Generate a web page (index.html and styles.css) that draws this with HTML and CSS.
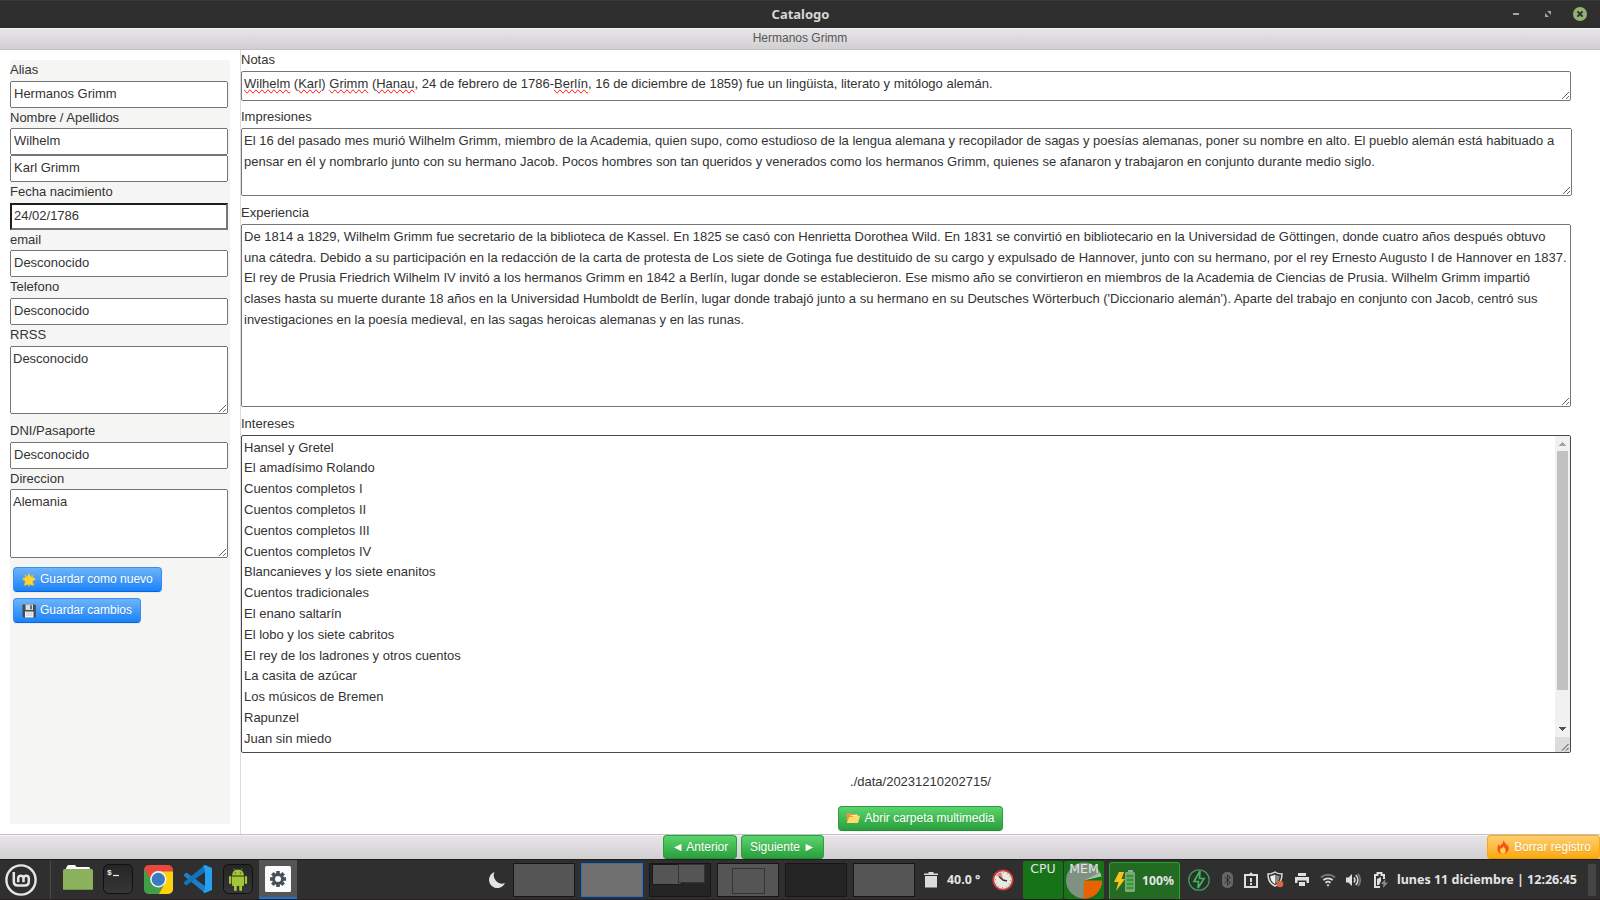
FILE: index.html
```html
<!DOCTYPE html>
<html lang="es">
<head>
<meta charset="utf-8">
<title>Catalogo</title>
<link rel="stylesheet" href="styles.css">
</head>
<body>
<div class="desktop">
  <div class="titlebar">
    <span class="titlebar-text">Catalogo</span>
    <div class="window-controls">
      <svg width="6" height="14" viewBox="0 0 6 14"><path d="M0 6h6v2H0z" fill="#a5a5a5"/></svg>
      <svg class="ctl-max" width="6" height="14" viewBox="0 0 6 14"><path d="M2 4h4v4zM0 6v4h4z" fill="#a5a5a5"/></svg>
      <svg width="14" height="14" viewBox="0 0 14 14"><circle cx="7" cy="7" r="7" fill="#92b372"/><path d="M4.400 4.400l5.200 5.200M9.600 4.400l-5.200 5.200" stroke="#2f2f2f" stroke-width="2"/></svg>
    </div>
  </div>
  <header class="toolbar toolbar-header"><h1 class="title">Hermanos Grimm</h1></header>

  <main class="content">
    <div class="side">
      <form class="side-form">
        <label>Alias</label>
        <input type="text" value="Hermanos Grimm">
        <label>Nombre / Apellidos</label>
        <input type="text" value="Wilhelm">
        <input type="text" value="Karl Grimm">
        <label>Fecha nacimiento</label>
        <input type="text" class="date" value="24/02/1786">
        <label>email</label>
        <input type="text" value="Desconocido">
        <label>Telefono</label>
        <input type="text" value="Desconocido">
        <label>RRSS</label>
        <textarea class="small">Desconocido</textarea>
        <label>DNI/Pasaporte</label>
        <input type="text" value="Desconocido">
        <label>Direccion</label>
        <textarea class="small last">Alemania</textarea>
        <button type="button" class="btn btn-primary">
          <svg class="emoji" viewBox="0 0 14 14"><path d="M7 0l1.300 3.200L11.600 1.500l-.9 3.400L14 6.500l-3 1.700 1.300 4.300-3.600-1.400L7 14l-1.700-2.900-3.600 1.400L3 8.200 0 6.500l3.300-1.600-.9-3.400 3.300 1.700z" fill="#f5b52e"/><path d="M7 .3l1.800 4.300 4.700.5-3.500 3.100 1.100 4.700L7 10.400l-4.100 2.500L4 8.200.5 5.100l4.700-.5z" fill="#fdd835"/></svg>
          <span>Guardar como nuevo</span>
        </button>
        <button type="button" class="btn btn-primary">
          <svg class="emoji" viewBox="0 0 14 14"><path d="M.5.500h12.500l.8 1v12H1.500l-1-1z" fill="#424b51"/><path d="M3.500.500h7.500v5.500H3.500z" fill="#d9dde0"/><path d="M8.300 1.200h1.500v4H8.300z" fill="#424b51"/><path d="M3 7.500h8.500v6H3z" fill="#f4f4f4"/><path d="M4 9h6.500M4 11h6.500" stroke="#b4bdc2" stroke-width=".8"/></svg>
          <span>Guardar cambios</span>
        </button>
      </form>
    </div>

    <section class="main-pane">
      <label>Notas</label>
      <div class="box notas"><span class="sp">Wilhelm</span> (<span class="sp">Karl</span>) <span class="sp">Grimm</span> (<span class="sp">Hanau</span>, 24 de febrero de 1786-<span class="sp">Berlín</span>, 16 de diciembre de 1859) fue un lingüista, literato y mitólogo alemán.</div>
      <label>Impresiones</label>
      <textarea class="impresiones">El 16 del pasado mes murió Wilhelm Grimm, miembro de la Academia, quien supo, como estudioso de la lengua alemana y recopilador de sagas y poesías alemanas, poner su nombre en alto. El pueblo alemán está habituado a pensar en él y nombrarlo junto con su hermano Jacob. Pocos hombres son tan queridos y venerados como los hermanos Grimm, quienes se afanaron y trabajaron en conjunto durante medio siglo.</textarea>
      <label>Experiencia</label>
      <textarea class="experiencia">De 1814 a 1829, Wilhelm Grimm fue secretario de la biblioteca de Kassel. En 1825 se casó con Henrietta Dorothea Wild. En 1831 se convirtió en bibliotecario en la Universidad de Göttingen, donde cuatro años después obtuvo una cátedra. Debido a su participación en la redacción de la carta de protesta de Los siete de Gotinga fue destituido de su cargo y expulsado de Hannover, junto con su hermano, por el rey Ernesto Augusto I de Hannover en 1837.
El rey de Prusia Friedrich Wilhelm IV invitó a los hermanos Grimm en 1842 a Berlín, lugar donde se establecieron. Ese mismo año se convirtieron en miembros de la Academia de Ciencias de Prusia. Wilhelm Grimm impartió clases hasta su muerte durante 18 años en la Universidad Humboldt de Berlín, lugar donde trabajó junto a su hermano en su Deutsches Wörterbuch ('Diccionario alemán'). Aparte del trabajo en conjunto con Jacob, centró sus investigaciones en la poesía medieval, en las sagas heroicas alemanas y en las runas.</textarea>
      <label>Intereses</label>
      <div class="box intereses">
        <div class="lines">Hansel y Gretel
El amadísimo Rolando
Cuentos completos I
Cuentos completos II
Cuentos completos III
Cuentos completos IV
Blancanieves y los siete enanitos
Cuentos tradicionales
El enano saltarín
El lobo y los siete cabritos
El rey de los ladrones y otros cuentos
La casita de azúcar
Los músicos de Bremen
Rapunzel
Juan sin miedo</div>
        <div class="scrollbar">
          <svg width="15" height="15" viewBox="0 0 15 15" shape-rendering="crispEdges"><path d="M4 10h7V9h-1V8H9V7H8V6H7v1H6v1H5v1H4z" fill="#a3a3a3"/></svg>
          <div class="thumb"></div>
          <svg class="down" width="15" height="15" viewBox="0 0 15 15" shape-rendering="crispEdges"><path d="M4 5h7v1h-1v1H9v1H8v1H7V8H6V7H5V6H4z" fill="#505050"/></svg>
          <svg class="corner" width="15" height="15" viewBox="0 0 15 15"><path d="M7 13.500L13.500 7M11 13.500l2.500-2.500" stroke="#444" stroke-width="1"/></svg>
        </div>
      </div>
      <div class="path">./data/20231210202715/</div>
      <div class="media">
        <button type="button" class="btn btn-positive open">
          <svg class="emoji" viewBox="0 0 14 14"><path d="M.5 3l.8-1h3.500l1 1.200h5.700l.5.600V12H1z" fill="#f19534"/><path d="M3.500 4.500L11 3.400l.5 3z" fill="#fff3d0"/><path d="M3.300 6h3.500L8 4.700h5.500l.4.600L12 12H.8z" fill="#ffdc6b"/></svg>
          <span>Abrir carpeta multimedia</span>
        </button>
      </div>
    </section>
  </main>

  <footer class="toolbar toolbar-footer">
    <div class="pager">
      <button type="button" class="btn btn-positive prev">◄ Anterior</button>
      <button type="button" class="btn btn-positive next">Siguiente ►</button>
    </div>
    <button type="button" class="btn btn-warning">
      <svg class="emoji" viewBox="0 0 14 14"><path d="M7.600 0c.3 3 3.200 3.500 3.200 6.200.5-.5.700-1.200.6-2 1.200 1.600 1.500 3.200 1.300 4.900-.4 3-2.700 4.900-5.700 4.900s-5.500-2-5.600-5c-.1-2 .8-3.300 1.300-4.800.7.500.9 1.200.9 2C5.500 4.700 7.400 3.200 7.600 0z" fill="#f4511e"/><path d="M7 5.500c.2 2 2.700 2.600 2.700 5.200 0 1.900-1.200 3-2.800 3s-2.800-1.100-2.800-3c0-1.300.6-2 1-3 .6.400.8.900.9 1.400C6.800 8 7.100 7 7 5.500z" fill="#ffd54f"/></svg>
      <span>Borrar registro</span>
    </button>
  </footer>

  <div class="taskbar">
    <svg class="mint" width="32" height="32" viewBox="0 0 32 32" fill="none" stroke="#e6e6e6"><circle cx="16" cy="16" r="14.600" stroke-width="2.400"/><path d="M8.800 8v9.500c0 2.500 1.500 4 4 4h7c2.500 0 4-1.500 4-4V14a2.700 2.700 0 0 0-5.300 0v4.300M18.500 14a2.700 2.700 0 0 0-5.300 0v4.300" stroke-width="2.500"/></svg>
    <i class="sep"></i>
    <svg class="i-folder" width="30" height="26" viewBox="0 0 30 26"><path d="M3 3l2-3h7l1.500 2H26l1 1v4H3z" fill="#fff"/><rect y="4" width="30" height="21" rx="1.500" fill="#8bb15d"/><path d="M1 24.500h28" stroke="#6f9446"/></svg>
    <svg class="i-term" width="30" height="30" viewBox="0 0 30 30"><defs><linearGradient id="dk" x2="0" y2="1"><stop stop-color="#252525"/><stop offset="1" stop-color="#363636"/></linearGradient></defs><rect x=".5" y=".5" width="29" height="29" rx="5" fill="url(#dk)" stroke="#111"/><text x="4" y="10.500" class="prompt">$</text><path d="M10 11.500h6" stroke="#eee" stroke-width="1.200"/></svg>
    <svg class="i-chrome" width="29" height="29" viewBox="0 0 29 29"><defs><clipPath id="cr"><rect width="29" height="29" rx="5"/></clipPath></defs><g clip-path="url(#cr)"><path d="M0 0h29v29H0z" fill="#e8493f"/><path d="M0 4l9 13 10 4-4 8H0z" fill="#41a047"/><path d="M14 6.500h15V29H15l6-11z" fill="#fdd208"/></g><circle cx="14.300" cy="14.300" r="8.200" fill="#f1f1f1"/><circle cx="14.300" cy="14.300" r="6.600" fill="#3a7abf"/></svg>
    <svg class="i-code" width="28" height="28" viewBox="0 0 28 28"><path d="M0 9.500l2.300-2L21 21v7L0 11z" fill="#1b80c8"/><path d="M0 18.500l2.300 2L21 7V0L0 17z" fill="#1274bd"/><path d="M21 0l7 3v22l-7 3-2-1 2-3V4.500L19 1z" fill="#26a1f1"/></svg>
    <svg class="i-android" width="30" height="30" viewBox="0 0 30 30"><rect x=".5" y=".5" width="29" height="29" rx="5" fill="url(#dk)" stroke="#111"/><g fill="#a4c639"><path d="M9 11.500a6 6 0 0 1 12 0z"/><path d="M9 12.500h12V21a1 1 0 0 1-1 1H10a1 1 0 0 1-1-1z"/><rect x="6" y="12" width="2.300" height="8" rx="1.100"/><rect x="21.800" y="12" width="2.300" height="8" rx="1.100"/><rect x="11" y="20" width="2.800" height="7" rx="1.200"/><rect x="16.200" y="20" width="2.800" height="7" rx="1.200"/></g><path d="M11 4.500l1.500 2.500M19 4.500L17.500 7" stroke="#a4c639" stroke-width=".7"/><circle cx="12.500" cy="9" r=".6" fill="#222"/><circle cx="17.500" cy="9" r=".6" fill="#222"/></svg>
    <div class="active-app"><svg width="26" height="26" viewBox="0 0 26 26"><rect width="26" height="26" rx="1.500" fill="#fafafa"/><g transform="translate(13 13)"><g fill="#45505f"><rect x="-1.800" y="-8" width="3.600" height="16"/><rect x="-1.800" y="-8" width="3.600" height="16" transform="rotate(45)"/><rect x="-1.800" y="-8" width="3.600" height="16" transform="rotate(90)"/><rect x="-1.800" y="-8" width="3.600" height="16" transform="rotate(135)"/><circle r="6"/></g><circle r="3" fill="#fafafa"/></g></svg></div>

    <svg class="i-moon" width="16" height="16" viewBox="0 0 16 16"><path d="M5.500 0A8.300 8.300 0 1 0 16 11 8.200 8.200 0 0 1 5.500 0z" fill="#e2e2e2"/></svg>
    <div class="workspaces">
      <div class="ws"></div>
      <div class="ws current"></div>
      <div class="ws dark"><i class="win w1"></i><i class="win w2"></i></div>
      <div class="ws"><i class="win w3"></i></div>
      <div class="ws dark"></div>
      <div class="ws"></div>
    </div>
    <svg class="i-trash" width="14" height="16" viewBox="0 0 14 16"><path d="M0 1.500h4.500V0h5v1.500H14V3H0zM1 4h12v11.500H1z" fill="#dcdcdc"/></svg>
    <span class="temp">40.0 °</span>
    <svg class="i-clock" width="22" height="22" viewBox="0 0 22 22"><circle cx="11" cy="11" r="9.700" fill="#e9e9e3" stroke="#cf3b3b" stroke-width="1.800"/><path d="M11 11L4.500 6A8 8 0 0 1 9.500 3.200z" fill="#e98181"/><path d="M7 7.500l4 3.500 4 1" stroke="#333" stroke-width="1.400" fill="none"/><circle cx="11" cy="11" r="7.500" fill="none" stroke="#777" stroke-width="1" stroke-dasharray=".8 3.127"/></svg>
    <div class="meter cpu">CPU</div>
    <div class="meter mem"><svg width="40" height="38" viewBox="0 0 40 38"><circle cx="20" cy="19.500" r="18" fill="#7f9180"/><path d="M20 19.500h18a18 18 0 0 1-18.500 18z" fill="#e86200"/><path d="M20 19.500l16-8 1.500 4z" fill="#a9c0aa"/><path d="M20 19.500l17.500-4 .5 4z" fill="#177317"/></svg><span>MEM</span></div>
    <div class="battery"><svg width="22" height="24" viewBox="0 0 22 24"><rect x="14" y="1" width="5" height="3" fill="#9aa69a"/><rect x="11" y="3" width="10" height="20" rx="1.500" fill="#7fa97f"/><path d="M12.500 7h7M12.500 11h7M12.500 15h7M12.500 19h7" stroke="#2f9e2f" stroke-width="2.400"/><path d="M5 3h5L7.500 10H11L2 22l2.500-9H0z" fill="#fbc21c"/></svg><span>100%</span></div>
    <svg class="i-bolt" width="22" height="22" viewBox="0 0 22 22"><circle cx="11" cy="11" r="10.200" fill="none" stroke="#35a052" stroke-width="1.300"/><path d="M12 2L6 12.500h4.500L10 19l6-9.500h-4.500z" fill="none" stroke="#3cba5c" stroke-width="1.700"/></svg>
    <svg class="i-bt" width="11" height="16" viewBox="0 0 11 16"><rect width="11" height="16" rx="5" fill="#666"/><path d="M2.500 5l6 5.500L5.500 13V3l3 2.500-6 5.500" stroke="#2f2f2f" fill="none"/></svg>
    <svg class="i-clip" width="14" height="16" viewBox="0 0 14 16"><path d="M1 3h12v12H1z" fill="none" stroke="#dfdfdf" stroke-width="2"/><path d="M4 2h1.500a1.500 1.500 0 0 1 3 0H10v2H4z" fill="#dfdfdf"/><path d="M6 6h2v4H6zM6 11h2v2H6z" fill="#dfdfdf"/></svg>
    <svg class="i-shield" width="17" height="17" viewBox="0 0 17 17"><path d="M8 1c2 1.500 4 2 7 2 0 6-2 10-7 12C3 13 1 9 1 3c3 0 5-.5 7-2z" fill="none" stroke="#dfdfdf" stroke-width="1.500"/><path d="M8 3.500c1.500 1 3 1.300 4.700 1.500 0 3.500-1.500 6.500-4.700 8z" fill="#888"/><path d="M8 3.500C6.500 4.500 5 4.800 3.300 5c0 3.500 1.500 6.500 4.700 8z" fill="#eee"/><circle cx="13" cy="13" r="3.300" fill="#d9693a"/></svg>
    <svg class="i-print" width="14" height="14" viewBox="0 0 14 14"><path d="M3 0h8v3H3zM0 4h14v6h-2.500V7.500h-9V10H0zM4 9h6v4H4z" fill="#dfdfdf"/></svg>
    <svg class="i-wifi" width="16" height="14" viewBox="0 0 16 14" fill="none"><path d="M1 4.500a10.500 10.500 0 0 1 14 0" stroke="#777" stroke-width="2"/><path d="M3.300 7.200a7 7 0 0 1 9.400 0M5.500 9.800a3.700 3.700 0 0 1 5 0" stroke="#dfdfdf" stroke-width="1.800"/><path d="M6.300 11.500h3.400L8 13.800z" fill="#dfdfdf"/></svg>
    <svg class="i-vol" width="16" height="14" viewBox="0 0 16 14" fill="none"><path d="M0 4.500h2.500L6 1v12L2.500 9.500H0z" fill="#dfdfdf"/><path d="M8 4.500a4 4 0 0 1 0 5M9.800 2a7 7 0 0 1 0 10" stroke="#dfdfdf" stroke-width="1.500"/><path d="M12 .8a9.500 9.500 0 0 1 0 12.400" stroke="#777" stroke-width="1.700"/></svg>
    <svg class="i-bat" width="14" height="16" viewBox="0 0 14 16"><path d="M6 15H1V3h2.500V1h4v2H10v4" fill="none" stroke="#dfdfdf" stroke-width="2"/><path d="M3 13V7l4-2v4l-2 4z" fill="#dfdfdf"/><path d="M11.500 7L7 12h2.500L9 16l5-5.500h-3z" fill="#8c8c8c"/></svg>
    <span class="clock">lunes 11 diciembre | 12:26:45</span>
    <i class="show-desktop"></i>
  </div>
</div>
</body>
</html>
```
FILE: styles.css
```css
* { box-sizing: border-box; }

body {
  margin: 0;
  width: 1600px;
  height: 900px;
  overflow: hidden;
  font: 13px/1.6 "Liberation Sans", Arial, sans-serif;
  color: #333;
  background: #fff;
}

.desktop {
  display: flex;
  flex-direction: column;
  height: 900px;
}

/* Window title bar */
.titlebar {
  flex: 0 0 28px;
  position: relative;
  display: flex;
  align-items: center;
  justify-content: center;
  background: #2f2f2f;
  border-top: 1px solid #3a3a3a;
}
.titlebar-text {
  padding: 0 0 2px 1px;
  font: bold 13px/24px "Noto Sans", sans-serif;
  color: #d6d6d6;
}
.window-controls {
  position: absolute;
  right: 13px;
  top: 6px;
  display: flex;
  align-items: center;
}
.ctl-max { margin: 0 22px 0 26px; }

/* Toolbars */
.toolbar {
  background: linear-gradient(to bottom, #e8e6e8 0%, #d1cfd1 100%);
  box-shadow: inset 0 1px 0 #f5f4f5;
}
.toolbar-header {
  flex: 0 0 22px;
  border-bottom: 1px solid #c2c0c2;
}
.title {
  margin: 0;
  font-size: 12px;
  font-weight: 400;
  line-height: 20px;
  text-align: center;
  color: #555;
}
.toolbar-footer {
  flex: 0 0 25px;
  display: flex;
  justify-content: space-between;
  border-top: 1px solid #c2c0c2;
}
.toolbar-footer .btn { height: 24px; margin: 0; }
.pager {
  display: flex;
  gap: 4px;
  padding-left: 663px;
}
.prev { width: 74px; }
.next { width: 83px; }
.btn-warning { width: 113px; }

/* Content */
.content {
  flex: 1 1 0;
  min-height: 0;
  display: flex;
}
.side {
  flex: 0 0 241px;
  padding: 10px;
  border-right: 1px solid #ddd;
}
.side-form {
  height: 764px;
  background: #f5f5f4;
  display: flex;
  flex-direction: column;
  align-items: flex-start;
}
label {
  display: block;
  flex: none;
  height: 20.8px;
}
input, textarea {
  display: block;
  flex: none;
  margin: 0;
  font: inherit;
  color: inherit;
}
input { width: 218px; height: 26.8px; padding: 0 2px 2px; }
.date {
  border: 2px solid #767676;
  border-top-color: #1e1e1e;
  border-left-color: #1e1e1e;
}
.small { width: 218px; height: 68.4px; margin-bottom: 7px; }
.last { margin-bottom: 9.4px; }

.main-pane {
  flex: 1;
  min-width: 0;
  display: flex;
  flex-direction: column;
}
.box {
  flex: none;
  width: 1330px;
  border: 1px solid #767676;
  border-radius: 2px;
  background: #fff;
}
.notas {
  height: 30px;
  padding: 2px;
  overflow: auto;
  resize: both;
  margin-bottom: 6.3px;
}
.sp { text-decoration-line: spelling-error; }
.impresiones { width: 1331px; height: 68.4px; margin-bottom: 6.7px; }
.experiencia { width: 1330px; height: 183px; margin-bottom: 7px; }
.intereses {
  height: 318px;
  display: flex;
  justify-content: space-between;
  border-color: #4a4a4a;
}
.lines { padding: 2px; white-space: pre; }
.scrollbar {
  display: flex;
  flex-direction: column;
  width: 15px;
  background: #f1f1f1;
}
.thumb { height: 239px; margin: 0 2px; background: #c1c1c1; }
.down { margin-top: auto; }
.corner { background: #dcdcdc; }
svg { display: block; flex: none; }

.path { margin-top: 19px; text-align: center; }
.media { display: flex; justify-content: center; margin-top: 13.6px; }
.path, .media { width: 1359px; }
.open { width: 165px; }

/* Buttons */
.btn {
  display: flex;
  align-items: center;
  justify-content: center;
  gap: 4px;
  flex: none;
  height: 25px;
  padding: 0 8px;
  font: 12px/16.8px "Liberation Sans", Arial, sans-serif;
  color: #fff;
  white-space: nowrap;
  text-shadow: 0 1px 1px rgba(0, 0, 0, .1);
  border: 1px solid;
  border-radius: 4px;
  box-shadow: 0 1px 1px rgba(0, 0, 0, .06);
}
.side-form .btn { margin: 0 0 6px 3px; }
.emoji { width: 14px; height: 14px; }
.btn-primary {
  border-color: #388df8 #388df8 #0866dc;
  background: linear-gradient(to bottom, #6eb4f7 0%, #1a82fb 100%);
}
.btn-positive {
  border-color: #29a03b #29a03b #248b34;
  background: linear-gradient(to bottom, #5bd46d 0%, #29a03b 100%);
}
.btn-warning {
  border-color: #fcaa0e #fcaa0e #ee9b02;
  background: linear-gradient(to bottom, #fece72 0%, #fcaa0e 100%);
}

/* Desktop panel */
.taskbar {
  flex: 0 0 41px;
  min-height: 0;
  display: flex;
  align-items: center;
  background: #2f2f2f;
  border-top: 1px solid #1f1f1f;
  border-bottom: 1px solid #262022;
  font-family: "Noto Sans", sans-serif;
  color: #e4e4e4;
}
.mint { margin-left: 5px; }
.sep { width: 1px; height: 38px; margin-left: 13px; background: #4a4a4a; }
.i-folder { margin-left: 12px; margin-top: -3px; }
.i-term { margin-left: 10px; margin-top: -1px; }
.prompt { font: bold 8px "Liberation Mono", monospace; fill: #eee; }
.i-chrome { margin-left: 11px; margin-top: -1px; }
.i-code { margin-left: 11px; margin-top: -1px; }
.i-android { margin-left: 11px; margin-top: -1px; }
.active-app {
  display: flex;
  justify-content: center;
  width: 38px;
  height: 39px;
  margin-left: 6px;
  padding-top: 6px;
  background: #555;
  border-bottom: 2px solid #1a73d9;
}
.i-moon { margin-left: 192px; }
.workspaces { display: flex; gap: 6px; margin-left: 8px; }
.ws {
  position: relative;
  width: 62px;
  height: 34px;
  background: #555;
  border: 1px solid #161616;
}
.current { background: #707070; border-color: #1a73d9; }
.dark { background: #252525; }
.win { position: absolute; background: #555; border: 1px solid #333; }
.w1 { left: 2px; top: 0; width: 30px; height: 21px; border-color: #191919; }
.w2 { left: 28px; top: 0; width: 27px; height: 19px; }
.w3 { left: 14px; top: 4px; width: 33px; height: 26px; }
.i-trash { margin-left: 9px; }
.temp { width: 36px; margin-left: 9px; font-size: 12.4px; font-weight: 700; white-space: nowrap; }
.i-clock { margin-left: 9px; }
.meter {
  position: relative;
  width: 40px;
  height: 38px;
  background: #177317;
  border-radius: 2px;
  font: 12.5px/15px "DejaVu Sans", sans-serif;
  text-align: center;
}
.cpu { margin-left: 9px; }
.mem { margin-left: 1px; }
.mem span { position: absolute; left: 0; right: 0; top: 0; }
.battery {
  display: flex;
  align-items: center;
  gap: 6px;
  width: 71px;
  height: 37px;
  margin-left: 5px;
  margin-top: 2px;
  padding-left: 4px;
  background: #236b23;
  border: 1px solid #22a822;
  border-bottom: 0;
  border-radius: 3px 3px 0 0;
  font-size: 12.2px;
  font-weight: 700;
}
.i-bolt { margin-left: 8px; }
.i-bt { margin-left: 12px; }
.i-clip { margin-left: 11px; }
.i-shield { margin-left: 9px; }
.i-print { margin-left: 11px; }
.i-wifi { margin-left: 11px; }
.i-vol { margin-left: 10px; }
.i-bat { margin-left: 12px; }
.clock {
  width: 183px;
  margin-left: 9px;
  padding-top: 1px;
  font-size: 12.5px;
  font-weight: 700;
  white-space: nowrap;
}
.show-desktop { width: 8px; height: 32px; margin-left: 8px; background: #444; }
```
